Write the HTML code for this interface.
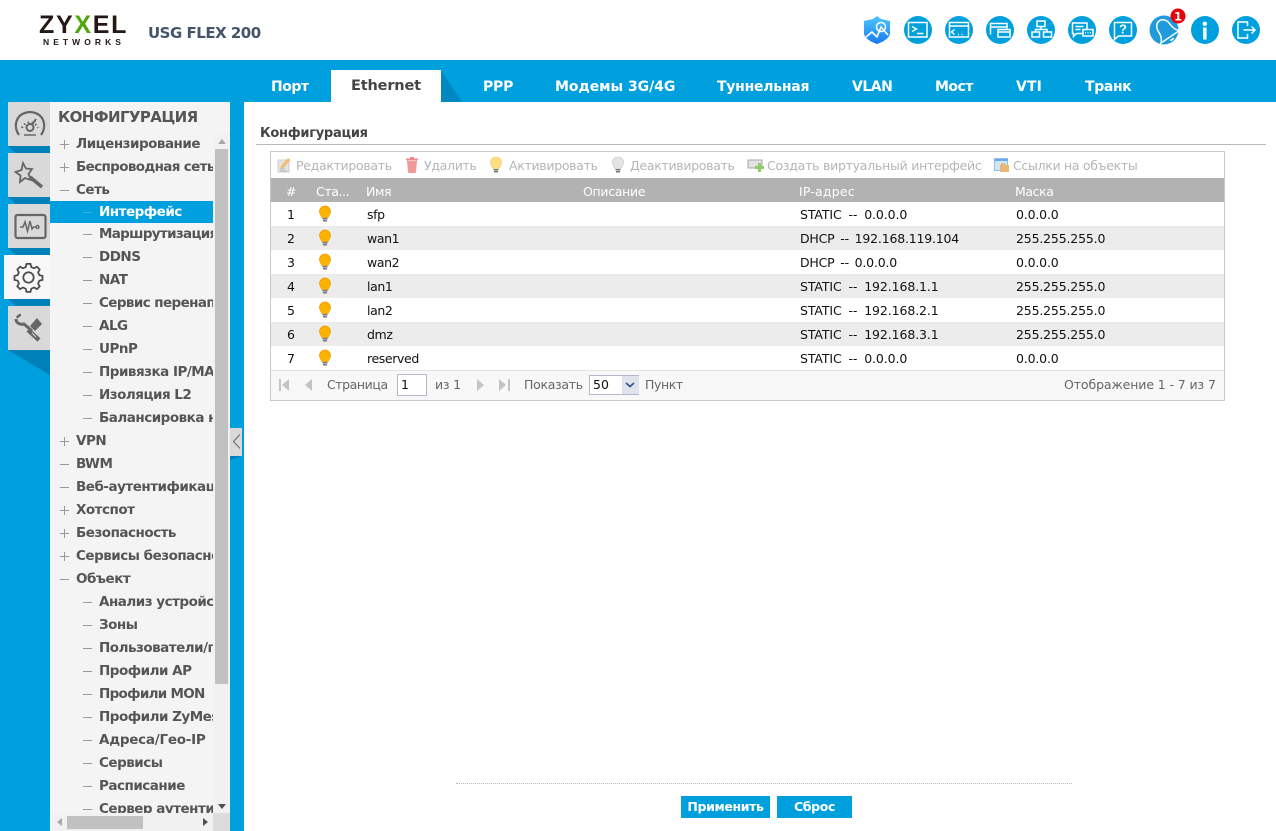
<!DOCTYPE html>
<html lang="ru"><head><meta charset="utf-8"><title>USG FLEX 200</title>
<style>
*{box-sizing:border-box}
html,body{margin:0;padding:0}
body{width:1276px;height:831px;overflow:hidden;position:relative;background:#00a0df;font-family:"DejaVu Sans","Liberation Sans",sans-serif;}
.a{position:absolute;white-space:nowrap}
#head{left:0;top:0;width:1276px;height:60px;background:#fff}
.tab{position:absolute;top:79px;color:#fff;font:bold 14px/16px "DejaVu Sans",sans-serif;letter-spacing:-.5px;white-space:nowrap}
#nav{left:50px;top:102px;width:180px;height:729px;background:#f4f4f4;overflow:hidden}
.n{position:absolute;left:0;width:163px;height:23px;overflow:hidden;color:#555;font:bold 13.5px/25px "DejaVu Sans",sans-serif;letter-spacing:-.5px;white-space:nowrap}
.n b{position:absolute;left:26px;top:0}
.n.s b{left:49px}
.n i{position:absolute;left:10px;top:12px;width:9px;height:1px;background:#999}
.n.s i{left:33px;width:9px}
.n.p u{position:absolute;left:14px;top:8px;width:1px;height:9px;background:#999}
.ic{position:absolute;left:8px;width:42px;height:44px;background:#d9d9d9}
.fold{position:absolute;left:8px;width:42px;height:7px;background:#0080b8;clip-path:polygon(0 0,100% 0,100% 100%,18% 100%)}
.tb{position:absolute;top:158px;color:#b5b5b5;font:12.5px/16px "DejaVu Sans",sans-serif;letter-spacing:-.3px;white-space:nowrap}
.th{position:absolute;top:184px;color:#fff;font:12.5px/16px "DejaVu Sans",sans-serif;letter-spacing:-.4px;white-space:nowrap}
.row{position:absolute;left:271px;width:953px;height:24px}
.c{position:absolute;color:#111;font:12.5px/16px "DejaVu Sans",sans-serif;letter-spacing:-.38px;white-space:nowrap}
.st{letter-spacing:-.1px;word-spacing:3px}
.dh{letter-spacing:-.2px;word-spacing:2px}
.m{letter-spacing:-.17px}
.pg{position:absolute;top:377px;color:#666;font:12.5px/16px "DejaVu Sans",sans-serif;letter-spacing:-.42px;white-space:nowrap}
svg{position:absolute;overflow:visible}
.btn{position:absolute;top:796px;height:22px;background:#00a0df;color:#fff;font:bold 12.5px/22px "DejaVu Sans",sans-serif;letter-spacing:-.35px;text-align:center}
</style></head><body>
<div id="head" class="a"></div>

<div class="a" style="left:39px;top:11px;font:bold 25px/28px 'Liberation Sans',sans-serif;letter-spacing:1.7px;color:#231815">ZY<span style="color:#4ea70b">X</span>EL</div>
<div class="a" style="left:43px;top:36px;font:bold 8.5px/12px 'Liberation Sans',sans-serif;letter-spacing:4.05px;color:#231815">NETWORKS</div>
<div class="a" style="left:148px;top:22px;font:bold 15px/22px 'DejaVu Sans',sans-serif;letter-spacing:-.5px;color:#44546a">USG FLEX 200</div>

<!-- top icons -->
<svg style="left:0;top:0" width="1276" height="60" fill="none" stroke="#fff" stroke-width="1.5">
<defs><linearGradient id="sh" x1="0" y1="0" x2="0" y2="1"><stop offset="0" stop-color="#4cc8ff"/><stop offset="1" stop-color="#1a78f0"/></linearGradient></defs>
<path d="M877 16l4 3 9 2v12c0 5-7 9-13 11-6-2-13-6-13-11V21l9-2z" fill="url(#sh)" stroke="none"/>
<path d="M866 37l6-5 5 5 4-10 7 8" stroke="#fff" stroke-width="1.6"/>
<circle cx="881" cy="27" r="4.500" stroke-width="1.600"/>
<g fill="#00a0df" stroke="none"><circle cx="918" cy="30" r="14"/><circle cx="959" cy="30" r="14"/><circle cx="1000" cy="30" r="14"/><circle cx="1041" cy="30" r="14"/><circle cx="1082" cy="30" r="14"/><circle cx="1123" cy="30" r="14"/><circle cx="1164" cy="30" r="14.500" fill="#1f9bdc"/><circle cx="1205" cy="30" r="14"/><circle cx="1246" cy="30" r="14"/></g>
<!-- terminal -->
<rect x="908.500" y="22.500" width="18.500" height="14.500"/><path d="M912 26.500l4.500 2.500-4.500 2.500M917 33.500h6.500"/>
<!-- code window -->
<rect x="949.500" y="22.500" width="19" height="14.500"/><path d="M949.500 26h19M954.500 29.500l-3 2.500 3 2.500M958 34.500h1M961.500 34.500h1" stroke-width="1.400"/>
<!-- windows -->
<path d="M990.500 34.500V23.500h16.500v5M990.500 27h16.500"/><rect x="998" y="29.500" width="12" height="7.500" fill="#00a0df"/><path d="M998 32h12"/>
<!-- sitemap -->
<rect x="1037" y="21" width="8" height="5.500"/><rect x="1032" y="32" width="7.500" height="5"/><rect x="1043.500" y="32" width="8" height="5"/><path d="M1041 26.500v3M1035.500 32v-2.500h11.500v2.500"/>
<!-- chat -->
<path d="M1072.500 23h14.500v10.500h-10.500l-3 3v-3h-1z"/><path d="M1075.500 26.500h8M1075.500 29.500h5"/><rect x="1083" y="29.500" width="10" height="6.500" fill="#00a0df"/><path d="M1085 32.800h1M1087.500 32.800h1M1090 32.800h1"/>
<!-- help -->
<path d="M1114.500 22.500h17v13.500h-13l-4 3.500z"/>
<text x="1123" y="33.500" fill="#fff" stroke="none" text-anchor="middle" font-family="Liberation Sans" font-weight="bold" font-size="13">?</text>
<!-- bell -->
<g transform="translate(1165 29) rotate(-34) scale(1.25)"><path d="M-9 7.500c2.500-2 3.500-4.500 3.500-8.500 0-4 2.500-7 5.500-7s5.500 3 5.500 7c0 4 1 6.500 3.500 8.500z" stroke-width="1.200"/><path d="M-1.500 9.500c.5 1 2.500 1 3 0" stroke-width="1.200"/></g>
<!-- info -->
<circle cx="1204.800" cy="23.800" r="2.200" fill="#fff" stroke="none"/><rect x="1203.100" y="27.500" width="3.500" height="12" fill="#fff" stroke="none"/>
<!-- logout -->
<path d="M1247.500 26v-4h-9.500v16h9.500v-4M1243.500 30h11.500M1251.500 26.500l3.500 3.500-3.500 3.500"/>
<circle cx="1178" cy="16" r="7.500" fill="#e8000b" stroke="none"/>
<text x="1178" y="20.500" fill="#fff" stroke="none" text-anchor="middle" font-family="DejaVu Sans" font-weight="bold" font-size="11.500">1</text>
</svg>

<!-- tabs -->
<div class="a" style="left:331px;top:70px;width:110px;height:32px;background:#fff"></div>
<div class="a" style="left:441px;top:70px;width:21px;height:32px;background:#0088c2;clip-path:polygon(0 0,100% 100%,0 100%)"></div>
<div class="tab" style="left:271px">Порт</div>
<div class="tab" style="left:351px;top:78px;color:#444;font-size:14.5px;letter-spacing:-.17px">Ethernet</div>
<div class="tab" style="left:483px;letter-spacing:-.2px">PPP</div>
<div class="tab" style="left:555px;letter-spacing:-.05px">Модемы 3G/4G</div>
<div class="tab" style="left:717px;letter-spacing:-.25px">Туннельная</div>
<div class="tab" style="left:852px">VLAN</div>
<div class="tab" style="left:935px">Мост</div>
<div class="tab" style="left:1016px;letter-spacing:.15px">VTI</div>
<div class="tab" style="left:1085px;letter-spacing:-.35px">Транк</div>

<!-- white content -->
<div class="a" style="left:244px;top:102px;width:1032px;height:729px;background:#fff"></div>

<!-- left icon tabs -->
<div class="ic" style="top:102px"></div><div class="fold" style="top:146px"></div>
<div class="ic" style="top:153px"></div><div class="fold" style="top:197px"></div>
<div class="ic" style="top:204px"></div><div class="fold" style="top:248px"></div>
<div class="ic" style="left:4px;width:46px;top:255px;background:#f8f8f8"></div><div class="fold" style="top:299px"></div>
<div class="ic" style="top:306px"></div>
<div class="a" style="left:8px;top:350px;width:42px;height:25px;background:#0080b8;clip-path:polygon(0 0,100% 0,100% 100%)"></div>
<svg style="left:0;top:0" width="50" height="360" fill="none" stroke="#666" stroke-width="2">
<!-- gauge -->
<path d="M19 135c-6-8-4-22 11-23 15 1 17 15 11 23" stroke-width="2.200"/>
<path d="M22 128a8.500 8.500 0 0 1 16 0" stroke-width="2" stroke-dasharray="1.500 2.500"/>
<circle cx="30" cy="127.500" r="3.500"/><path d="M32 125l4-6"/><path d="M24 135h12" stroke-width="1.500"/>
<!-- wand -->
<path d="M23 163l3 5.500 6 .5-3.500 5 2.500 6-6-2-5 4 .5-6.500-5-3.500 6-2z" stroke-width="1.800"/><path d="M30 177l12 10" stroke-width="3.500"/>
<!-- monitor -->
<rect x="15.500" y="215" width="30" height="23" rx="2" stroke-width="2.200"/><path d="M20 227h3l2-5 2.500 9 2.500-10 2 8 1.500-2h2" stroke-width="1.500"/><circle cx="37.500" cy="227" r="1.500" stroke-width="1.400"/>
<!-- gear -->
<g transform="translate(28.500 277.500) scale(.8) translate(-28.500 -278)"><path d="M26 262h5l1 4 3.500 1.500 3.500-2 3.500 3.500-2 3.500 1.500 3.500 4 1v5l-4 1-1.500 3.500 2 3.500-3.500 3.500-3.500-2-3.500 1.500-1 4h-5l-1-4-3.500-1.500-3.500 2-3.500-3.500 2-3.500-1.500-3.500-4-1v-5l4-1 1.500-3.500-2-3.500 3.500-3.500 3.500 2 3.500-1.500z" stroke="#4c4c4c" stroke-width="2.200" transform="translate(0 -1)"/><circle cx="28.500" cy="278" r="6.500" stroke="#4c4c4c" stroke-width="2.200"/></g>
<!-- tools -->
<path d="M16 319c0 4 4 6 8 5l8 7" stroke-width="3"/><path d="M21 315c-2 0-3 1-4 3" stroke-width="2.500"/>
<path d="M30 326l7-8 5 6-7 7z" fill="#666" stroke="none"/>
<path d="M28 330l11 10" stroke-width="4.500"/><path d="M32 333l4 4" stroke="#d9d9d9" stroke-width="1"/>
</svg>

<!-- nav -->
<div id="nav" class="a">
<div class="a" style="left:8px;top:4px;font:bold 15px/22px 'DejaVu Sans',sans-serif;letter-spacing:-.6px;color:#555">КОНФИГУРАЦИЯ</div>
<div class="n p" style="top:30px"><i></i><u></u><b>Лицензирование</b></div>
<div class="n p" style="top:53px"><i></i><u></u><b style="letter-spacing:-.65px">Беспроводная сеть</b></div>
<div class="n" style="top:76px"><i></i><b>Сеть</b></div>
<div class="n s" style="top:99px;height:22px;background:#00a0df;color:#fff"><i style="background:#3fb2e4;top:11px"></i><b style="color:#fff;top:-1px">Интерфейс</b></div>
<div class="n s" style="top:120px"><i></i><b style="letter-spacing:-.68px">Маршрутизация</b></div>
<div class="n s" style="top:143px"><i></i><b>DDNS</b></div>
<div class="n s" style="top:166px"><i></i><b>NAT</b></div>
<div class="n s" style="top:189px"><i></i><b style="letter-spacing:-.6px">Сервис перенаправления</b></div>
<div class="n s" style="top:212px"><i></i><b>ALG</b></div>
<div class="n s" style="top:235px"><i></i><b>UPnP</b></div>
<div class="n s" style="top:258px"><i></i><b>Привязка IP/MAC</b></div>
<div class="n s" style="top:281px"><i></i><b>Изоляция L2</b></div>
<div class="n s" style="top:304px"><i></i><b>Балансировка нагрузки</b></div>
<div class="n p" style="top:327px"><i></i><u></u><b>VPN</b></div>
<div class="n" style="top:350px"><i></i><b>BWM</b></div>
<div class="n" style="top:373px"><i></i><b>Веб-аутентификация</b></div>
<div class="n p" style="top:396px"><i></i><u></u><b>Хотспот</b></div>
<div class="n p" style="top:419px"><i></i><u></u><b>Безопасность</b></div>
<div class="n p" style="top:442px"><i></i><u></u><b>Сервисы безопасности</b></div>
<div class="n" style="top:465px"><i></i><b>Объект</b></div>
<div class="n s" style="top:488px"><i></i><b>Анализ устройств</b></div>
<div class="n s" style="top:511px"><i></i><b>Зоны</b></div>
<div class="n s" style="top:534px"><i></i><b>Пользователи/группы</b></div>
<div class="n s" style="top:557px"><i></i><b>Профили AP</b></div>
<div class="n s" style="top:580px"><i></i><b style="letter-spacing:-.7px">Профили MON</b></div>
<div class="n s" style="top:603px"><i></i><b>Профили ZyMesh</b></div>
<div class="n s" style="top:626px"><i></i><b style="letter-spacing:-.25px">Адреса/Гео-IP</b></div>
<div class="n s" style="top:649px"><i></i><b>Сервисы</b></div>
<div class="n s" style="top:672px"><i></i><b>Расписание</b></div>
<div class="n s" style="top:695px;height:16px"><i></i><b>Сервер аутентификации</b></div>
<!-- scrollbars -->
<div class="a" style="left:163px;top:31px;width:17px;height:680px;background:#f1f1f1"></div>
<div class="a" style="left:165px;top:47px;width:13px;height:535px;background:#c1c1c1"></div>
<div class="a" style="left:168px;top:37px;border:4.500px solid transparent;border-top:0;border-bottom:5px solid #a8a8a8;width:0;height:0"></div>
<div class="a" style="left:168px;top:702px;border:4.500px solid transparent;border-bottom:0;border-top:5px solid #505050;width:0;height:0"></div>
<div class="a" style="left:0;top:711px;width:163px;height:18px;background:#f1f1f1"></div>
<div class="a" style="left:163px;top:711px;width:17px;height:18px;background:#dcdcdc"></div>
<div class="a" style="left:17px;top:714px;width:76px;height:13px;background:#c1c1c1"></div>
<div class="a" style="left:7px;top:716px;border:4.500px solid transparent;border-left:0;border-right:5px solid #a8a8a8;width:0;height:0"></div>
<div class="a" style="left:153px;top:716px;border:4.500px solid transparent;border-right:0;border-left:5px solid #505050;width:0;height:0"></div>
</div>

<!-- collapse handle -->
<div class="a" style="left:230px;top:428px;width:12px;height:28px;background:#d9d9d9"></div>
<div class="a" style="left:230px;top:456px;width:12px;height:4px;background:#0080b8;clip-path:polygon(0 0,100% 0,0 100%)"></div>
<svg style="left:0;top:0" width="260" height="460" fill="none" stroke="#666" stroke-width="1"><path d="M240 434.500l-6.500 7 6.500 7"/></svg>

<!-- section -->
<div class="a" style="left:260px;top:125px;font:bold 13px/17px 'DejaVu Sans',sans-serif;letter-spacing:-.27px;color:#444">Конфигурация</div>
<div class="a" style="left:256px;top:144px;width:1010px;height:1px;background:#b8b8b8"></div>

<!-- grid -->
<div class="a" style="left:270px;top:151px;width:955px;height:250px;border:1px solid #c8c8c8;background:#fff"></div>
<div class="a" style="left:271px;top:178px;width:953px;height:24px;background:#b2b2b2"></div>
<div class="row" style="top:226px;background:#ececec"></div>
<div class="row" style="top:274px;background:#ececec"></div>
<div class="row" style="top:322px;background:#ececec"></div>
<div class="a" style="left:271px;top:370px;width:953px;height:30px;background:#f8f8f8;border-top:1px solid #e2e2e2"></div>

<!-- toolbar icons -->
<svg style="left:0;top:0" width="1276" height="400">
<defs><g id="bulb"><path d="M6 0a5.500 5.500 0 0 1 5.500 5.500c0 2.500-1.800 3.800-2.500 6H3c-.7-2.200-2.500-3.500-2.500-6A5.500 5.500 0 0 1 6 0z"/><rect x="3.500" y="12" width="5" height="1.500" fill="#777" stroke="none"/><rect x="4" y="14" width="4" height="1.500" fill="#777" stroke="none"/></g></defs>
<path d="M278 160h11v12h-11z" fill="#e4e4e4" stroke="#ccc"/><path d="M281 166l7-8 2.500 2-7 8-3 1z" fill="#f0c070"/><path d="M280 169h5M280 171h7" stroke="#bbb"/>
<path d="M407 161h10l-1 11a1 1 0 0 1-1 1h-6a1 1 0 0 1-1-1z" fill="#f29a9a"/><rect x="406" y="158.500" width="12" height="2" fill="#e98989"/><rect x="410" y="157" width="4" height="2" fill="#e98989"/>
<use href="#bulb" x="490" y="157" fill="#ffdf80" stroke="#f2c860" stroke-width=".6"/>
<use href="#bulb" x="612" y="157" fill="#e4e4e4" stroke="#c4c4c4" stroke-width=".6"/>
<rect x="748" y="160" width="14" height="8" fill="#e2e2e2" stroke="#aaa"/><path d="M758 163h3v3h3v3h-3v3h-3v-3h-3v-3h3z" fill="#8ecb6a"/>
<rect x="994.500" y="158.500" width="13" height="12" fill="#cfe6fb" stroke="#8ebff0"/><path d="M995 160h13" stroke="#6ea8ea" stroke-width="2"/><rect x="1000" y="165" width="9" height="7" fill="#eab676"/><rect x="1001" y="163" width="4" height="2" fill="#eab676"/>
<g fill="#fdb200" stroke="#e89a00" stroke-width=".7">
<use href="#bulb" x="319" y="206"/><use href="#bulb" x="319" y="230"/><use href="#bulb" x="319" y="254"/><use href="#bulb" x="319" y="278"/><use href="#bulb" x="319" y="302"/><use href="#bulb" x="319" y="326"/><use href="#bulb" x="319" y="350"/>
</g>
<!-- pager icons -->
<g fill="#c4c4c4"><rect x="279" y="379" width="2" height="12"/><path d="M289 379v12l-7-6zM312 379v12l-7-6zM477 379v12l7-6zM499 379v12l7-6z"/><rect x="508" y="379" width="2" height="12"/></g>
</svg>
<div class="tb" style="left:296px">Редактировать</div>
<div class="tb" style="left:424px">Удалить</div>
<div class="tb" style="left:509px">Активировать</div>
<div class="tb" style="left:630px">Деактивировать</div>
<div class="tb" style="left:767px;letter-spacing:-.25px">Создать виртуальный интерфейс</div>
<div class="tb" style="left:1013px">Ссылки на объекты</div>

<div class="th" style="left:286px">#</div>
<div class="th" style="left:316px">Ста...</div>
<div class="th" style="left:366px">Имя</div>
<div class="th" style="left:583px;letter-spacing:-.3px">Описание</div>
<div class="th" style="left:799px;letter-spacing:.2px">IP-адрес</div>
<div class="th" style="left:1015px">Маска</div>

<div class="c" style="left:287px;top:207px">1</div><div class="c" style="left:367px;top:207px">sfp</div><div class="c st" style="left:800px;top:207px">STATIC -- 0.0.0.0</div><div class="c m" style="left:1016px;top:207px">0.0.0.0</div>
<div class="c" style="left:287px;top:231px">2</div><div class="c" style="left:367px;top:231px">wan1</div><div class="c dh" style="left:800px;top:231px">DHCP -- 192.168.119.104</div><div class="c m" style="left:1016px;top:231px">255.255.255.0</div>
<div class="c" style="left:287px;top:255px">3</div><div class="c" style="left:367px;top:255px">wan2</div><div class="c dh" style="left:800px;top:255px">DHCP -- 0.0.0.0</div><div class="c m" style="left:1016px;top:255px">0.0.0.0</div>
<div class="c" style="left:287px;top:279px">4</div><div class="c" style="left:367px;top:279px">lan1</div><div class="c st" style="left:800px;top:279px">STATIC -- 192.168.1.1</div><div class="c m" style="left:1016px;top:279px">255.255.255.0</div>
<div class="c" style="left:287px;top:303px">5</div><div class="c" style="left:367px;top:303px">lan2</div><div class="c st" style="left:800px;top:303px">STATIC -- 192.168.2.1</div><div class="c m" style="left:1016px;top:303px">255.255.255.0</div>
<div class="c" style="left:287px;top:327px">6</div><div class="c" style="left:367px;top:327px">dmz</div><div class="c st" style="left:800px;top:327px">STATIC -- 192.168.3.1</div><div class="c m" style="left:1016px;top:327px">255.255.255.0</div>
<div class="c" style="left:287px;top:351px">7</div><div class="c" style="left:367px;top:351px">reserved</div><div class="c st" style="left:800px;top:351px">STATIC -- 0.0.0.0</div><div class="c m" style="left:1016px;top:351px">0.0.0.0</div>

<!-- pager -->
<div class="pg" style="left:327px">Страница</div>
<div class="a" style="left:397px;top:374px;width:30px;height:22px;background:#fff;border:1px solid #b5b8c8;font:12.5px/20px 'DejaVu Sans',sans-serif;color:#111;padding-left:3px">1</div>
<div class="pg" style="left:435px;letter-spacing:-.2px">из 1</div>
<div class="pg" style="left:524px;letter-spacing:-.3px">Показать</div>
<div class="a" style="left:589px;top:375px;width:50px;height:20px;background:#fff;border:1px solid #b5b8c8;font:12.5px/18px 'DejaVu Sans',sans-serif;color:#111;padding-left:3px">50<span class="a" style="left:32px;top:0;width:17px;height:18px;background:#dfe3ee"></span></div>
<svg style="left:0;top:0" width="640" height="390" fill="none" stroke="#3a5a8c" stroke-width="1.800"><path d="M626 383l4 3.500 4-3.500"/></svg>
<div class="pg" style="left:645px">Пункт</div>
<div class="pg" style="left:1064px;letter-spacing:-.1px">Отображение 1 - 7 из 7</div>

<!-- footer -->
<div class="a" style="left:456px;top:783px;width:616px;height:0;border-top:1px dotted #bbb"></div>
<div class="btn" style="left:681px;width:89px">Применить</div>
<div class="btn" style="left:777px;width:75px">Сброс</div>
</body></html>
